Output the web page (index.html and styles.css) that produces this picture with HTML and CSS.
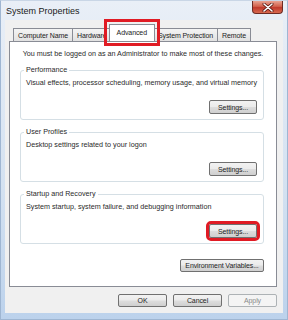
FILE: index.html
```html
<!DOCTYPE html>
<html lang="en">
<head>
  <meta charset="UTF-8">
  <title>System Properties</title>
  <link rel="stylesheet" href="styles.css">
</head>
<body>
  <div class="window">
    <div class="titlebar">
      <span class="title">System Properties</span>
      <span class="close">
        <svg width="12" height="9" viewBox="0 0 12 9">
          <path d="M2 1 L10 8 M10 1 L2 8" stroke="#5a1a14" stroke-width="3" stroke-linecap="round"/>
          <path d="M2 1 L10 8 M10 1 L2 8" stroke="#fff" stroke-width="1.6" stroke-linecap="round"/>
        </svg>
      </span>
    </div>
    <div class="client">
      <div class="tabs">
        <div class="tab">Computer Name</div>
        <div class="tab">Hardware</div>
        <div class="tab active marked">Advanced</div>
        <div class="tab">System Protection</div>
        <div class="tab">Remote</div>
      </div>
      <div class="panel">
        <p class="note">You must be logged on as an Administrator to make most of these changes.</p>
        <fieldset class="group">
          <legend>Performance</legend>
          <p>Visual effects, processor scheduling, memory usage, and virtual memory</p>
          <div class="actions"><button>Settings...</button></div>
        </fieldset>
        <fieldset class="group">
          <legend>User Profiles</legend>
          <p>Desktop settings related to your logon</p>
          <div class="actions"><button>Settings...</button></div>
        </fieldset>
        <fieldset class="group">
          <legend>Startup and Recovery</legend>
          <p>System startup, system failure, and debugging information</p>
          <div class="actions"><button class="marked-btn">Settings...</button></div>
        </fieldset>
        <div class="actions env"><button class="wide">Environment Variables...</button></div>
      </div>
      <div class="dialog-buttons">
        <button>OK</button>
        <button>Cancel</button>
        <button disabled>Apply</button>
      </div>
    </div>
  </div>
</body>
</html>
```

FILE: styles.css
```css
body { margin: 0; font-family: "Liberation Sans", Arial, sans-serif; color: #1e1e1e; letter-spacing: -0.1px; }
.window { width: 288px; height: 320px; box-sizing: border-box; display: flex; flex-direction: column; background: linear-gradient(#e9eff7, #d3e1f1 60%, #bcd2ec); border: 1px solid #9fb6d2; border-top-color: #c9d6e6; }
.titlebar { height: 19px; display: flex; justify-content: space-between; align-items: flex-start; padding-left: 5px; }
.title { font-size: 9px; line-height: 20px; color: #1a1a1a; letter-spacing: 0; }
.close { width: 31px; height: 13px; margin-right: 4px; border: 1px solid #6d2b24; border-top: none; border-radius: 0 0 4px 4px; box-sizing: border-box; background: linear-gradient(#e9a392, #d2614c 45%, #c0392b 55%, #d86a50); display: flex; align-items: center; justify-content: center; }
.client { flex: 1; margin: 0 4px 6px 4px; background: #f0f0f0; padding: 4px 6px 6px 4px; display: flex; flex-direction: column; }
.tabs { display: flex; align-items: flex-end; padding-left: 4px; height: 17px; }
.tab { font-size: 7px; height: 13px; line-height: 13px; padding: 0 4px; border: 1px solid #898c95; border-bottom: none; margin-right: -1px; background: linear-gradient(#f4f4f4, #e1e1e1); color: #222; box-sizing: border-box; }
.tab.active { height: 17px; line-height: 15px; background: #fff; padding: 0 7px; margin: 0 -2px; position: relative; z-index: 1; }
.marked { outline: 3px solid #e01b24; outline-offset: 2px; z-index: 2; }
.panel { flex: 1; background: #fff; border: 1px solid #898c95; padding: 7px 12px 0 10px; display: flex; flex-direction: column; }
.panel p { margin: 0; font-size: 7.2px; letter-spacing: 0; line-height: 10px; white-space: nowrap; color: #2a2a2a; }
.note { text-align: center; padding-left: 2px; margin-bottom: 6px !important; }
.group { margin: 0 0 7px 0; border: 1px solid #d5dfe5; border-radius: 3px; padding: 3px 6px 5px 5px; }
.group legend { font-size: 7.2px; letter-spacing: 0; line-height: 10px; padding: 0 2px; margin-left: -2px; color: #2a2a2a; }
.actions { display: flex; justify-content: flex-end; margin-top: 12px; }
.env { margin-top: 8px; }
button { font-family: inherit; font-size: 7px; letter-spacing: -0.1px; color: #1e1e1e; width: 48px; height: 14px; padding: 0; border: 1px solid #707070; border-radius: 2px; background: linear-gradient(#f2f2f2, #ebebeb 48%, #dddddd 52%, #cfcfcf); }
button.wide { width: 84px; height: 13px; }
button:disabled { color: #8a8a8a; border-color: #adb2b5; background: #f4f4f4; }
.marked-btn { outline: 3px solid #e01b24; outline-offset: 0; }
.dialog-buttons { display: flex; justify-content: flex-end; gap: 6px; margin-top: 7px; }
.dialog-buttons button { width: 49px; height: 13px; }
```
